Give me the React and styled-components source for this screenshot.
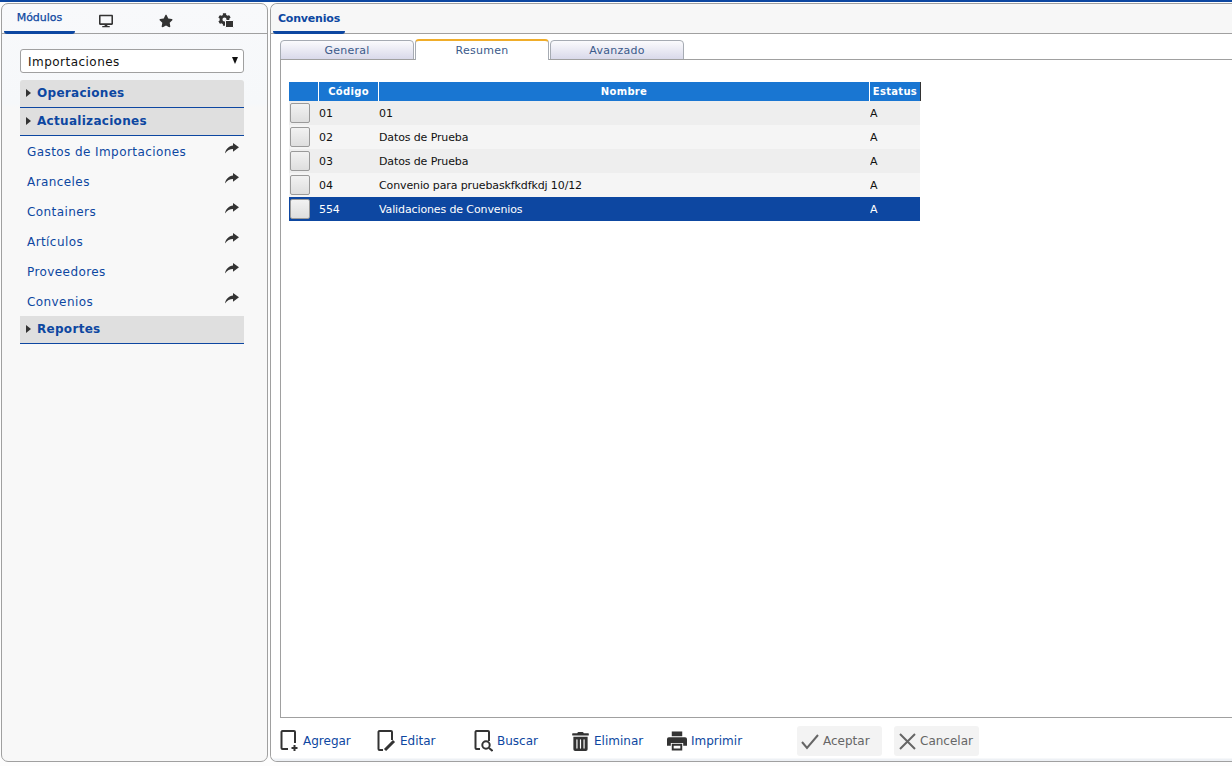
import React from "react";
import styled, { createGlobalStyle } from "styled-components";
import { FaStar, FaDesktop, FaCog, FaTrashAlt } from "react-icons/fa";

const Global = createGlobalStyle`
  html, body { margin: 0; padding: 0; height: 100%; background: #fff; overflow: hidden; }
  body { font-family: "DejaVu Sans", Verdana, sans-serif; }
  #root { height: 766px; }
`;
const Page = styled.div`
  width: 1232px; height: 766px; box-sizing: border-box;
  border-top: 2px solid #0d47a1; padding: 1px 0 4px 1px;
  display: flex; gap: 2px; background: #fdfdfd;
`;
const Panel = styled.section`
  box-sizing: border-box; height: 759px; border: 1px solid #a0a0a0;
  border-radius: 7px; display: flex; flex-direction: column; overflow: hidden;
`;
const LeftPanel = styled(Panel)`
  width: 267px;
  background: linear-gradient(#f8f9fb 0, #f6f8fa 100px, #f8f8f8 104px);
`;
const RightPanel = styled(Panel)`
  width: 962px; border-right: 0; border-radius: 7px 0 0 7px; background: #fff;
`;
const TabBar = styled.div`
  height: 30px; flex: none; box-sizing: border-box; border-bottom: 1px solid #a0a0a0;
  display: flex; padding-left: 2px; background: ${p => p.$bg || "transparent"};
`;
const TopTab = styled.div`
  width: ${p => p.$w}px; height: 30px; box-sizing: border-box; flex: none;
  display: flex; align-items: center; justify-content: center;
  font-size: 11px; font-weight: ${p => p.$weight || 400};
  letter-spacing: ${p => p.$weight ? "-.2px" : "0"};
  color: ${p => p.$active ? "#0d47a1" : "#333"};
  border-bottom: ${p => p.$active ? "3px solid #0d47a1" : "none"};
  border-radius: 0 0 3px 3px;
  padding-top: ${p => p.$active ? (p.$stroke ? 0 : 1) : 3}px;
  padding-left: ${p => p.$active ? 0 : 1}px;
  -webkit-text-stroke: ${p => p.$stroke ? "0.25px #0d47a1" : "0"};
`;
const IconStack = styled.span`
  position: relative; display: inline-flex; width: 15px; height: 15px;
`;
const Badge = styled.span`
  position: absolute; right: -1px; bottom: 0; width: 7px; height: 6px;
  background: #333; border: 1px solid #f8f9fb; border-radius: 1px;
`;
const Side = styled.div`
  padding: 15px 23px 0 18px; display: flex; flex-direction: column;
`;
const SelectBox = styled.div`
  height: 24px; box-sizing: border-box; background: #fff; border: 1px solid #a0a0a0;
  border-radius: 3px; display: flex; align-items: center; justify-content: space-between;
  padding: 1px 5px 0 7px; font-size: 12px; letter-spacing: .47px; color: #111; margin-bottom: 7px;
`;
const Arrow = styled.span`
  width: 0; height: 0; border-left: 3px solid transparent; border-right: 3px solid transparent;
  border-top: 7px solid #111; margin-bottom: 3px;
`;
const GroupHead = styled.div`
  height: 28px; box-sizing: border-box; background: #dfdfdf; border-bottom: 1px solid #0d47a1;
  display: flex; align-items: center; color: #0d47a1; font-weight: 700; font-size: 12px;
  letter-spacing: .3px; padding: 0 0 2px 6px; gap: 6px;
  border-radius: ${p => p.$first ? "3px 3px 0 0" : "0"};
`;
const Caret = styled.span`
  width: 0; height: 0; flex: none; border-left: 5px solid #333;
  border-top: 4px solid transparent; border-bottom: 4px solid transparent;
`;
const Item = styled.div`
  height: 30px; box-sizing: border-box; display: flex; align-items: center; justify-content: space-between;
  font-size: 12px; letter-spacing: .42px; color: #0d47a1; padding: 1px 5px 0 7px;
  svg { margin-bottom: 7px; flex: none; }
`;
const Tabs = styled.div`
  height: 26px; flex: none; display: flex; align-items: flex-end; padding-left: 9px; gap: 1px;
`;
const Tab = styled.div`
  width: 134px; box-sizing: border-box; display: flex; align-items: center; justify-content: center;
  font-size: 11px; letter-spacing: .25px; color: #3b5a8a;
  height: ${p => p.$active ? 21 : 20}px;
  border: 1px solid #a6abb3; border-bottom: ${p => p.$active ? "0" : "1px solid #a6abb3"};
  border-radius: 4px 4px 0 0; padding-top: ${p => p.$active ? 0 : 1}px;
  ${p => p.$active
    ? "background:#fff; border-top:2px solid #f0ad2a; border-left-color:#a6abb3; position:relative; z-index:1;"
    : "background:linear-gradient(#fbfbfd,#d9d9ea);"}
`;
const Content = styled.div`
  height: 659px; flex: none; margin-left: 9px; box-sizing: border-box;
  border: 1px solid #a0a0a0; border-right: 0; margin-top: -1px; padding: 22px 0 0 8px; background: #fff;
`;
const Table = styled.table`
  border-collapse: separate; border-spacing: 0; table-layout: fixed; width: 631px; font-size: 11px;
`;
const Th = styled.th`
  height: 19px; box-sizing: border-box; padding: 0; background: #1976d2; color: #fff; font-size: 10px; font-weight: 700;
  letter-spacing: .3px; text-align: center;
  ${p => p.$last ? "box-shadow: 1px 0 0 #333;" : "border-right: 1px solid #fff;"}
`;
const Row = styled.tr`
  background: ${p => p.$sel ? "#0d47a1" : p.$odd ? "#eeeeee" : "#f5f5f5"};
  color: ${p => p.$sel ? "#fff" : "#111"};
`;
const Td = styled.td`
  height: 24px; padding: 0; letter-spacing: -.12px; white-space: nowrap; overflow: hidden;
`;
const PickCell = styled.td` height: 24px; padding: 0; `;
const Pick = styled.div`
  width: 20px; height: 20px; box-sizing: border-box; margin-left: 1px;
  border: 1px solid #9a9a9a; border-radius: 2px; background: linear-gradient(#f2f2f2,#dedede);
`;
const Footer = styled.div`
  flex: 1; display: flex; align-items: center; padding: 3px 0 0 9px;
  background: linear-gradient(#fff 0, #fff 40px, #eef1f5 41px);
`;
const Action = styled.div`
  width: ${p => p.$w || 97}px; flex: none; height: 30px; display: flex; align-items: center; gap: 4px;
  font-size: 12px; color: #0d47a1; svg { flex: none; color: #333; }
`;
const Disabled = styled.div`
  width: 85px; height: 30px; box-sizing: border-box; flex: none; background: #f3f3f3; border-radius: 3px;
  display: flex; align-items: center; gap: 3px; padding-left: 3px; font-size: 12px; color: #666;
  margin-right: 12px; svg { flex: none; }
`;
const ActionSpacer = styled.div` width: 33px; flex: none; `;

const DocIcon = ({ children }) => (
  <svg width="19" height="22" viewBox="0 0 19 22" fill="none" stroke="#333" strokeWidth="2">{children}</svg>
);
const ShareArrow = () => (
  <svg width="14" height="11" viewBox="0 0 14 11" fill="#333">
    <path d="M8 0l6 4.3L8 8.8V6C5 6 2 7.2 0 10.5 .8 6 4 3 8 2.6z" />
  </svg>
);
const Printer = () => (
  <svg width="20" height="20" viewBox="0 0 21 20" fill="#333">
    <path d="M5 0h11v5H5z" />
    <path d="M2 6h17a2 2 0 0 1 2 2v7h-4v-3H4v3H0V8a2 2 0 0 1 2-2z" />
    <path d="M5 13h11v7H5zM7 15v3h7v-3z" fillRule="evenodd" />
  </svg>
);
const rows = [
  ["01", "01"], ["02", "Datos de Prueba"], ["03", "Datos de Prueba"],
  ["04", "Convenio para pruebaskfkdfkdj 10/12"], ["554", "Validaciones de Convenios"],
];
const items = ["Gastos de Importaciones", "Aranceles", "Containers", "Artículos", "Proveedores", "Convenios"];

export default function App() {
  return (
    <>
      <Global />
      <Page>
        <LeftPanel>
          <TabBar>
            <TopTab $w={71} $active $stroke>Módulos</TopTab>
            <TopTab $w={60}><FaDesktop size={14} /></TopTab>
            <TopTab $w={60}><FaStar size={14} /></TopTab>
            <TopTab $w={60}>
              <IconStack><FaCog size={13} /><Badge /></IconStack>
            </TopTab>
          </TabBar>
          <Side>
            <SelectBox>Importaciones<Arrow /></SelectBox>
            <GroupHead $first><Caret />Operaciones</GroupHead>
            <GroupHead><Caret />Actualizaciones</GroupHead>
            <div>
              {items.map(t => <Item key={t}>{t}<ShareArrow /></Item>)}
            </div>
            <GroupHead><Caret />Reportes</GroupHead>
          </Side>
        </LeftPanel>
        <RightPanel>
          <TabBar $bg="#f7f7f7">
            <TopTab $w={72} $active $weight={700}>Convenios</TopTab>
          </TabBar>
          <Tabs>
            <Tab>General</Tab>
            <Tab $active>Resumen</Tab>
            <Tab>Avanzado</Tab>
          </Tabs>
          <Content>
            <Table>
              <colgroup>
                <col width="30" /><col width="60" /><col width="491" /><col width="50" />
              </colgroup>
              <thead>
                <tr><Th /><Th>Código</Th><Th>Nombre</Th><Th $last>Estatus</Th></tr>
              </thead>
              <tbody>
                {rows.map((r, i) => (
                  <Row key={r[0]} $odd={i % 2 === 0} $sel={i === 4}>
                    <PickCell><Pick /></PickCell>
                    <Td>{r[0]}</Td><Td>{r[1]}</Td><Td>A</Td>
                  </Row>
                ))}
              </tbody>
            </Table>
          </Content>
          <Footer>
            <Action>
              <DocIcon><path d="M8 19H2.5a1 1 0 0 1-1-1V2a1 1 0 0 1 1-1H14a1 1 0 0 1 1 1v11" /><path d="M14.5 15v6M11.5 18h6" /></DocIcon>Agregar
            </Action>
            <Action>
              <DocIcon><path d="M6 20H2.5a1 1 0 0 1-1-1V2a1 1 0 0 1 1-1H14a1 1 0 0 1 1 1v8" /><path d="M8 20l9-9" strokeWidth="3" /></DocIcon>Editar
            </Action>
            <Action>
              <DocIcon><path d="M6 19H2.5a1 1 0 0 1-1-1V2a1 1 0 0 1 1-1H14a1 1 0 0 1 1 1v9" /><circle cx="12" cy="15" r="3.7" /><path d="M15 18l3.5 3" /></DocIcon>Buscar
            </Action>
            <Action $w={96}><FaTrashAlt size={19} />Eliminar</Action>
            <Action $w={97}><Printer />Imprimir</Action>
            <ActionSpacer />
            <Disabled>
              <svg width="20" height="20" viewBox="0 0 20 20" fill="none" stroke="#666" strokeWidth="2"><path d="M2 11l5 6L18 4" /></svg>
              Aceptar
            </Disabled>
            <Disabled>
              <svg width="20" height="20" viewBox="0 0 20 20" fill="none" stroke="#666" strokeWidth="2"><path d="M3 3l15 15M18 3L3 18" /></svg>
              Cancelar
            </Disabled>
          </Footer>
        </RightPanel>
      </Page>
    </>
  );
}
